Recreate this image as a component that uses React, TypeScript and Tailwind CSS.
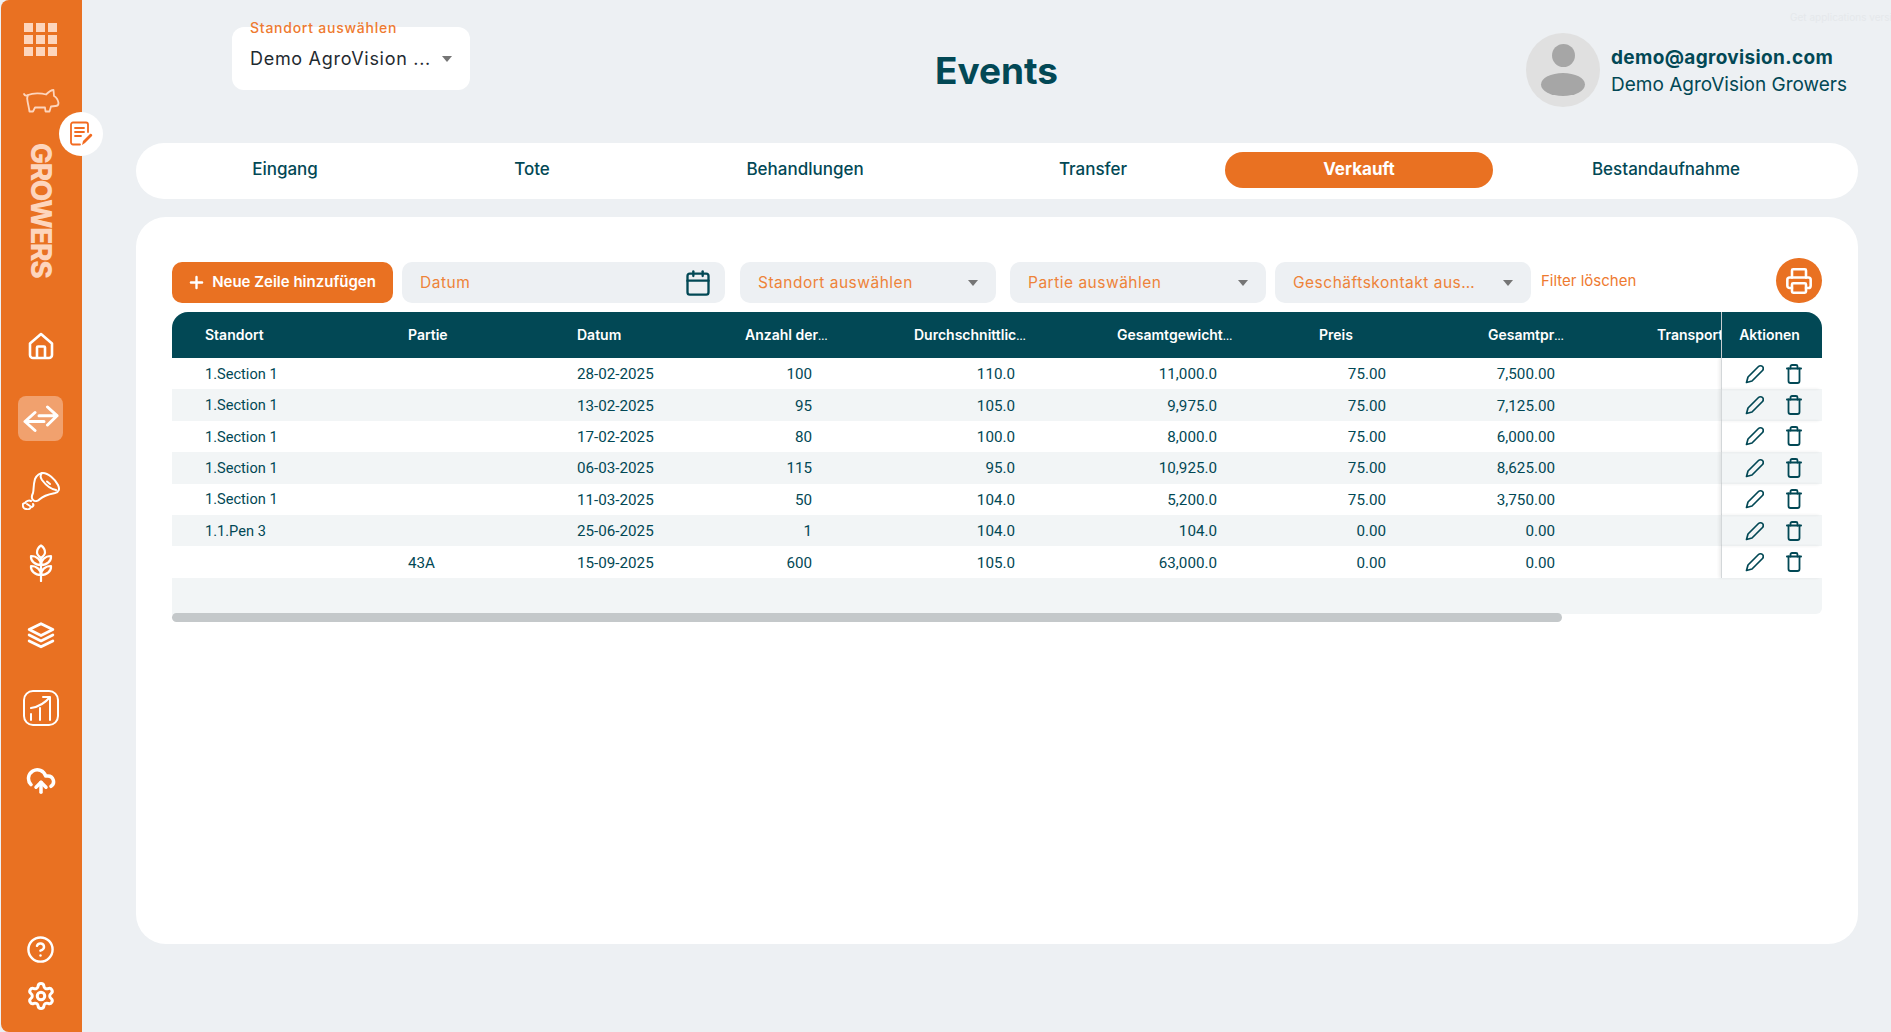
import { CircleHelp, CloudUpload, Calendar, Plus, Printer, Settings } from "lucide-react";

const UI = "font-['Inter','Noto_Sans',sans-serif]";

const rows = [
  { standort: "1.Section 1", partie: "", datum: "28-02-2025", anzahl: "100", avg: "110.0", total: "11,000.0", preis: "75.00", gesamt: "7,500.00" },
  { standort: "1.Section 1", partie: "", datum: "13-02-2025", anzahl: "95", avg: "105.0", total: "9,975.0", preis: "75.00", gesamt: "7,125.00" },
  { standort: "1.Section 1", partie: "", datum: "17-02-2025", anzahl: "80", avg: "100.0", total: "8,000.0", preis: "75.00", gesamt: "6,000.00" },
  { standort: "1.Section 1", partie: "", datum: "06-03-2025", anzahl: "115", avg: "95.0", total: "10,925.0", preis: "75.00", gesamt: "8,625.00" },
  { standort: "1.Section 1", partie: "", datum: "11-03-2025", anzahl: "50", avg: "104.0", total: "5,200.0", preis: "75.00", gesamt: "3,750.00" },
  { standort: "1.1.Pen 3", partie: "", datum: "25-06-2025", anzahl: "1", avg: "104.0", total: "104.0", preis: "0.00", gesamt: "0.00" },
  { standort: "", partie: "43A", datum: "15-09-2025", anzahl: "600", avg: "105.0", total: "63,000.0", preis: "0.00", gesamt: "0.00" },
];

const cols = "grid grid-cols-[202px_169px_168px_169px_203px_202px_169px_169px_98px_100px]";

function Caret() {
  return <span className="h-0 w-0 border-x-[5px] border-t-[6px] border-x-transparent border-t-[#757575]" />;
}

function GridIcon() {
  return (
    <div className="grid grid-cols-3 gap-[3px]">
      {Array.from({ length: 9 }).map((_, i) => (
        <span key={i} className="h-[9px] w-[9px] bg-[#fdd5bd]" />
      ))}
    </div>
  );
}

function Pig() {
  return (
    <svg width="38" height="25" viewBox="-1 -1 38 25" fill="none" stroke="#fdd5bd" strokeWidth="1.8" strokeLinejoin="round" strokeLinecap="round">
      <path d="M1 5c1 2 3 2 4 1C10 4 18 4 23 5.500 25 3.500 28 1 30.500 1l.5 6c2 1 4 4 4.500 7 0 2-1 3-3 3l-4.500.5-1.500 5h-4l-.5-4H12l-2 4H6.500C6 19 5 15 4.500 12 4 10 4 8 5 6" />
    </svg>
  );
}

function NoteIcon() {
  return (
    <svg width="24" height="26" viewBox="0 0 24 26" fill="none" stroke="#f26b21" strokeWidth="1.8" strokeLinecap="round" strokeLinejoin="round">
      <path d="M11 23.500H4a2 2 0 0 1-2-2V3.500a2 2 0 0 1 2-2h13a2 2 0 0 1 2 2V11" />
      <path d="M6 7h9M6 11h9M6 15h6" />
      <path d="M13 24l1-4 7-7c1-1 3 1 2 2l-7 7z" fill="#f26b21" stroke="none" />
    </svg>
  );
}

function HomeIcon() {
  return (
    <svg width="26" height="28" viewBox="0 0 26 28" fill="none" stroke="#fff" strokeWidth="2.6" strokeLinejoin="round">
      <path d="M2 11.500 13 2l11 9.500V23a3 3 0 0 1-3 3H5a3 3 0 0 1-3-3z" />
      <path d="M9 26V15.500a1 1 0 0 1 1-1h6a1 1 0 0 1 1 1V26" />
    </svg>
  );
}

function ArrowsIcon() {
  return (
    <svg width="36" height="29" viewBox="-2 -2 36 29" fill="none" stroke="#fff" strokeWidth="3" strokeLinecap="round" strokeLinejoin="round">
      <path d="M22.500 1 32 9.700 22.500 19M14 9.700h18" />
      <path d="M10 6.500 0 15.500l10 9M0 15.500h19" />
    </svg>
  );
}

function HamIcon() {
  return (
    <svg width="38" height="38" viewBox="0 0 38 38" fill="none" stroke="#fff" strokeWidth="2" strokeLinecap="round" strokeLinejoin="round">
      <path d="M13 7C15 3 18 1 21 1c5 0 12 6 15 12 2 4 1 7-3 8-5 1-11 2-15 6-2 2-5 3-7 1-2-2-1-5 0-7 1-3 0-7 2-14z" />
      <path d="M20 1c-2 2-2 4 0 7 3 4 8 9 14 10" />
      <path d="M25 9.500l3 2.500" />
      <path d="M9 29c-2-1-5 0-6 2-2 0-3 2-2 3 0 2 2 3 3 3 2 1 4 0 5-2 2 0 3-2 2-3" />
      <path d="M5 32l3 2" />
    </svg>
  );
}

function WheatIcon() {
  return (
    <svg width="24" height="38" viewBox="0 0 24 38" fill="none" stroke="#fff" strokeWidth="2.2" strokeLinecap="round" strokeLinejoin="round">
      <path d="M12 1.500c-3 2-4 5-4 7s2 4 4 5.500c2-1.500 4-3.500 4-5.500s-1-5-4-7z" />
      <path d="M12 21c0-5-4-9-10-9-.5 5 4 9 10 9zM12 21c0-5 4-9 10-9 .5 5-4 9-10 9z" />
      <path d="M12 31c0-5-4-9-10-9-.5 5 4 9 10 9zM12 31c0-5 4-9 10-9 .5 5-4 9-10 9z" />
      <path d="M12 14v23" />
    </svg>
  );
}

function LayersIcon() {
  return (
    <svg width="28" height="27" viewBox="0 0 26 25" fill="none" stroke="#fff" strokeWidth="2.6" strokeLinecap="round" strokeLinejoin="round">
      <path d="M13 1.500 24 7 13 12.500 2 7z" />
      <path d="M2 12l11 5.500L24 12" />
      <path d="M2 17.500 13 23l11-5.500" />
    </svg>
  );
}

function ChartIcon() {
  return (
    <svg width="36" height="36" viewBox="0 0 36 36" fill="none" stroke="#fff" strokeWidth="2" strokeLinecap="round" strokeLinejoin="round">
      <rect x="1" y="1" width="34" height="34" rx="9" />
      <path d="M8 18c7-1 14-5 19-11M20 7h7v6" />
      <path d="M8 30v-6M17 30V18M27 30V13" />
    </svg>
  );
}

function PencilIcon() {
  return (
    <svg width="19" height="20" viewBox="0 0 19 20" fill="none" stroke="#024855" strokeWidth="1.7" strokeLinecap="round" strokeLinejoin="round">
      <path d="M1.500 18.500 3 13 13.500 2.500c1-1 3-1 4 0s1 3 0 4L7 17z" />
    </svg>
  );
}

function TrashIcon() {
  return (
    <svg width="16" height="20" viewBox="0 0 16 20" fill="none" stroke="#024855" strokeWidth="1.8" strokeLinecap="round" strokeLinejoin="round">
      <path d="M.900 4.500h14.200" />
      <path d="M4.500 4.500V2.500a1.500 1.500 0 0 1 1.500-1.500h4a1.500 1.500 0 0 1 1.500 1.500v2" />
      <path d="M2.500 4.500v12.500a2 2 0 0 0 2 2h7a2 2 0 0 0 2-2V4.500" />
    </svg>
  );
}

function Avatar() {
  return (
    <div className="flex h-[74px] w-[74px] shrink-0 flex-col items-center rounded-full bg-[#e0e0e0] pt-[11px]">
      <span className="h-[23px] w-[23px] rounded-full bg-[#a6a6a6]" />
      <span className="mt-[6px] h-[23px] w-[44px] rounded-[50%] bg-[#a6a6a6]" />
    </div>
  );
}

function Side({ children }: { children: React.ReactNode }) {
  return <div className="flex h-[72.4px] items-center justify-center">{children}</div>;
}

function Sidebar() {
  return (
    <aside className="relative ml-px flex h-[1032px] w-[81px] shrink-0 flex-col items-center rounded-l-[8px] bg-[#e97122] pr-[2px]">
      <div className="flex h-[70px] items-end pb-[14px]"><GridIcon /></div>
      <div className="flex h-[60px] items-center"><Pig /></div>
      <div className="mt-[13px] flex h-[136px] items-center text-[28px] font-extrabold leading-none tracking-[-1.4px] text-[#fdd5bd] [writing-mode:vertical-rl]">GROWERS</div>
      <div className="absolute left-[58px] top-[112px] flex h-[44px] w-[44px] items-center justify-center rounded-full bg-white">
        <NoteIcon />
      </div>
      <div className="mt-[31px] flex flex-col items-center">
        <Side><HomeIcon /></Side>
        <Side>
          <div className="flex h-[45px] w-[45px] items-center justify-center rounded-[8px] bg-[#f1a16e]"><ArrowsIcon /></div>
        </Side>
        <Side><HamIcon /></Side>
        <Side><WheatIcon /></Side>
        <Side><LayersIcon /></Side>
        <Side><ChartIcon /></Side>
        <Side><CloudUpload size={30} color="#fff" strokeWidth={2.8} /></Side>
      </div>
      <div className="mt-auto mb-[21px] flex flex-col items-center gap-[17px]">
        <CircleHelp size={29} color="#fff" strokeWidth={2} />
        <Settings size={30} color="#fff" strokeWidth={2.4} />
      </div>
    </aside>
  );
}

function Filter({ label, width }: { label: string; width: string }) {
  return (
    <div className={`flex h-[41px] items-center justify-between rounded-[10px] bg-[#edf0f3] pl-[18px] pr-[18px] ${width}`}>
      <span className="text-[15.5px] tracking-[0.5px] text-[#ee8339]">{label}</span>
      <Caret />
    </div>
  );
}

function Tabs() {
  const tabs = ["Eingang", "Tote", "Behandlungen", "Transfer", "Verkauft", "Bestandaufnahme"];
  return (
    <div className="mr-[34px] grid h-[56px] grid-cols-[260px_234px_312px_264px_268px_346px] items-center rounded-[28px] bg-white px-[19px] pb-[2px]">
      {tabs.map((t) => (
        <div
          key={t}
          className={
            t === "Verkauft"
              ? "flex h-[36px] items-center justify-center rounded-[18px] bg-[#e97122] text-[17px] font-bold text-white"
              : "flex h-[36px] items-center justify-center text-[17px] font-medium text-[#024855]"
          }
        >
          {t}
        </div>
      ))}
    </div>
  );
}

function HeadLabel({ text }: { text: string }) {
  // the ellipsis in this stack is wider than in the picture
  if (!text.endsWith("…")) return <>{text}</>;
  return (
    <>
      {text.slice(0, -1)}
      <span className="text-[10px]">…</span>
    </>
  );
}

function Table() {
  const heads = ["Standort", "Partie", "Datum", "Anzahl der…", "Durchschnittlic…", "Gesamtgewicht…", "Preis", "Gesamtpr…", "Transport"];
  return (
    <div className="mt-[9px] mr-[36px] ml-[36px]">
      <div className={`${cols} h-[46px] items-center rounded-t-[16px] bg-[#024855] pb-[2px] text-[14px] font-semibold text-white`}>
        {heads.map((h) => (
          <div key={h} className={`overflow-hidden whitespace-nowrap ${h === "Standort" ? "pl-[33px]" : "pl-[34px]"}`}>
            <HeadLabel text={h} />
          </div>
        ))}
        <div className="-mb-[2px] flex h-[46px] items-center justify-center border-l border-[#c8cdd0] pb-[2px] pr-[4px]">Aktionen</div>
      </div>
      {rows.map((r, i) => (
        <div key={i} className={`${cols} h-[31.4px] items-center font-['Roboto',sans-serif] text-[15.2px] text-[#024855] ${i % 2 === 1 ? "bg-[#f2f5f6]" : "bg-white"}`}>
          <div className="pl-[33px] pt-[2px] text-[14.6px]">{r.standort}</div>
          <div className="pl-[34px] pt-[2px]">{r.partie}</div>
          <div className="pl-[34px] pt-[2px]">{r.datum}</div>
          <div className="pr-[68px] pt-[2px] text-right">{r.anzahl}</div>
          <div className="pr-[68px] pt-[2px] text-right">{r.avg}</div>
          <div className="pr-[68px] pt-[2px] text-right">{r.total}</div>
          <div className="pr-[68px] pt-[2px] text-right">{r.preis}</div>
          <div className="pr-[68px] pt-[2px] text-right">{r.gesamt}</div>
          <div />
          <div className="flex h-full items-center justify-center gap-[22px] border-l border-[#d3d7d9] pl-[4px] shadow-[-2px_0_3px_rgba(0,0,0,0.07)]">
            <PencilIcon />
            <TrashIcon />
          </div>
        </div>
      ))}
      <div className="h-[36px] rounded-br-[6px] bg-[#f2f5f6]" />
      <div className="-mt-px h-[9px] w-[1390px] rounded-[5px] bg-[#c4c8ca]" />
    </div>
  );
}

export default function App() {
  return (
    <div className={`flex h-[1032px] w-[1891px] overflow-hidden bg-[#edf0f3] ${UI}`}>
      <Sidebar />
      <main className="relative flex-1 pl-[54px]">
        <header className="flex h-[143px] items-start">
          <div className="relative ml-[96px] mt-[27px] flex h-[63px] w-[238px] items-center justify-between rounded-[12px] bg-white pl-[18px] pr-[18px]">
            <span className="absolute left-[18px] -top-[10px] text-[14px] font-medium tracking-[0.75px] text-[#ee7a30]">Standort auswählen</span>
            <span className="text-[18px] tracking-[0.7px] text-[#1f2a30]">Demo AgroVision ...</span>
            <Caret />
          </div>
          <h1 className="flex-1 pr-[3px] pt-[46px] text-center text-[37px] font-bold leading-[50px] text-[#024855]">Events</h1>
          <div className="mr-[34px] mt-[33px] flex w-[332px] items-center gap-[11px]">
            <Avatar />
            <div className="pt-[2px] text-[#024855]">
              <p className="text-[19px] font-bold leading-[27px] tracking-[0.35px]">demo@agrovision.com</p>
              <p className="text-[19px] leading-[27px]">Demo AgroVision Growers</p>
            </div>
          </div>
          <span className="absolute right-0 top-[10px] whitespace-nowrap text-[10px] text-[#e5e8eb]">Get applications versi</span>
        </header>
        <Tabs />
        <section className="mr-[34px] mt-[18px] h-[727px] rounded-[30px] bg-white pt-[45px]">
          <div className="relative flex items-center pl-[36px]">
            <button className="flex h-[41px] w-[221px] items-center justify-center gap-[6px] rounded-[10px] bg-[#e97122] pr-[2px] text-[15px] font-semibold text-white">
              <Plus size={19} strokeWidth={3} />
              Neue Zeile hinzufügen
            </button>
            <div className="ml-[9px] flex h-[41px] w-[323px] items-center justify-between rounded-[10px] bg-[#edf0f3] pl-[18px] pr-[13px]">
              <span className="text-[15.5px] tracking-[0.5px] text-[#ee8339]">Datum</span>
              <Calendar size={28} color="#024855" strokeWidth={2} />
            </div>
            <div className="ml-[15px]"><Filter label="Standort auswählen" width="w-[256px]" /></div>
            <div className="ml-[14px]"><Filter label="Partie auswählen" width="w-[256px]" /></div>
            <div className="ml-[9px]"><Filter label="Geschäftskontakt aus…" width="w-[256px]" /></div>
            <span className="mb-[2px] ml-[10px] text-[15px] text-[#ee7a30]">Filter löschen</span>
            <div className="absolute right-[36px] -top-[4px] flex h-[45px] w-[46px] items-center justify-center rounded-full bg-[#e97122]">
              <Printer size={28} color="#fff" strokeWidth={2.2} />
            </div>
          </div>
          <Table />
        </section>
      </main>
    </div>
  );
}
